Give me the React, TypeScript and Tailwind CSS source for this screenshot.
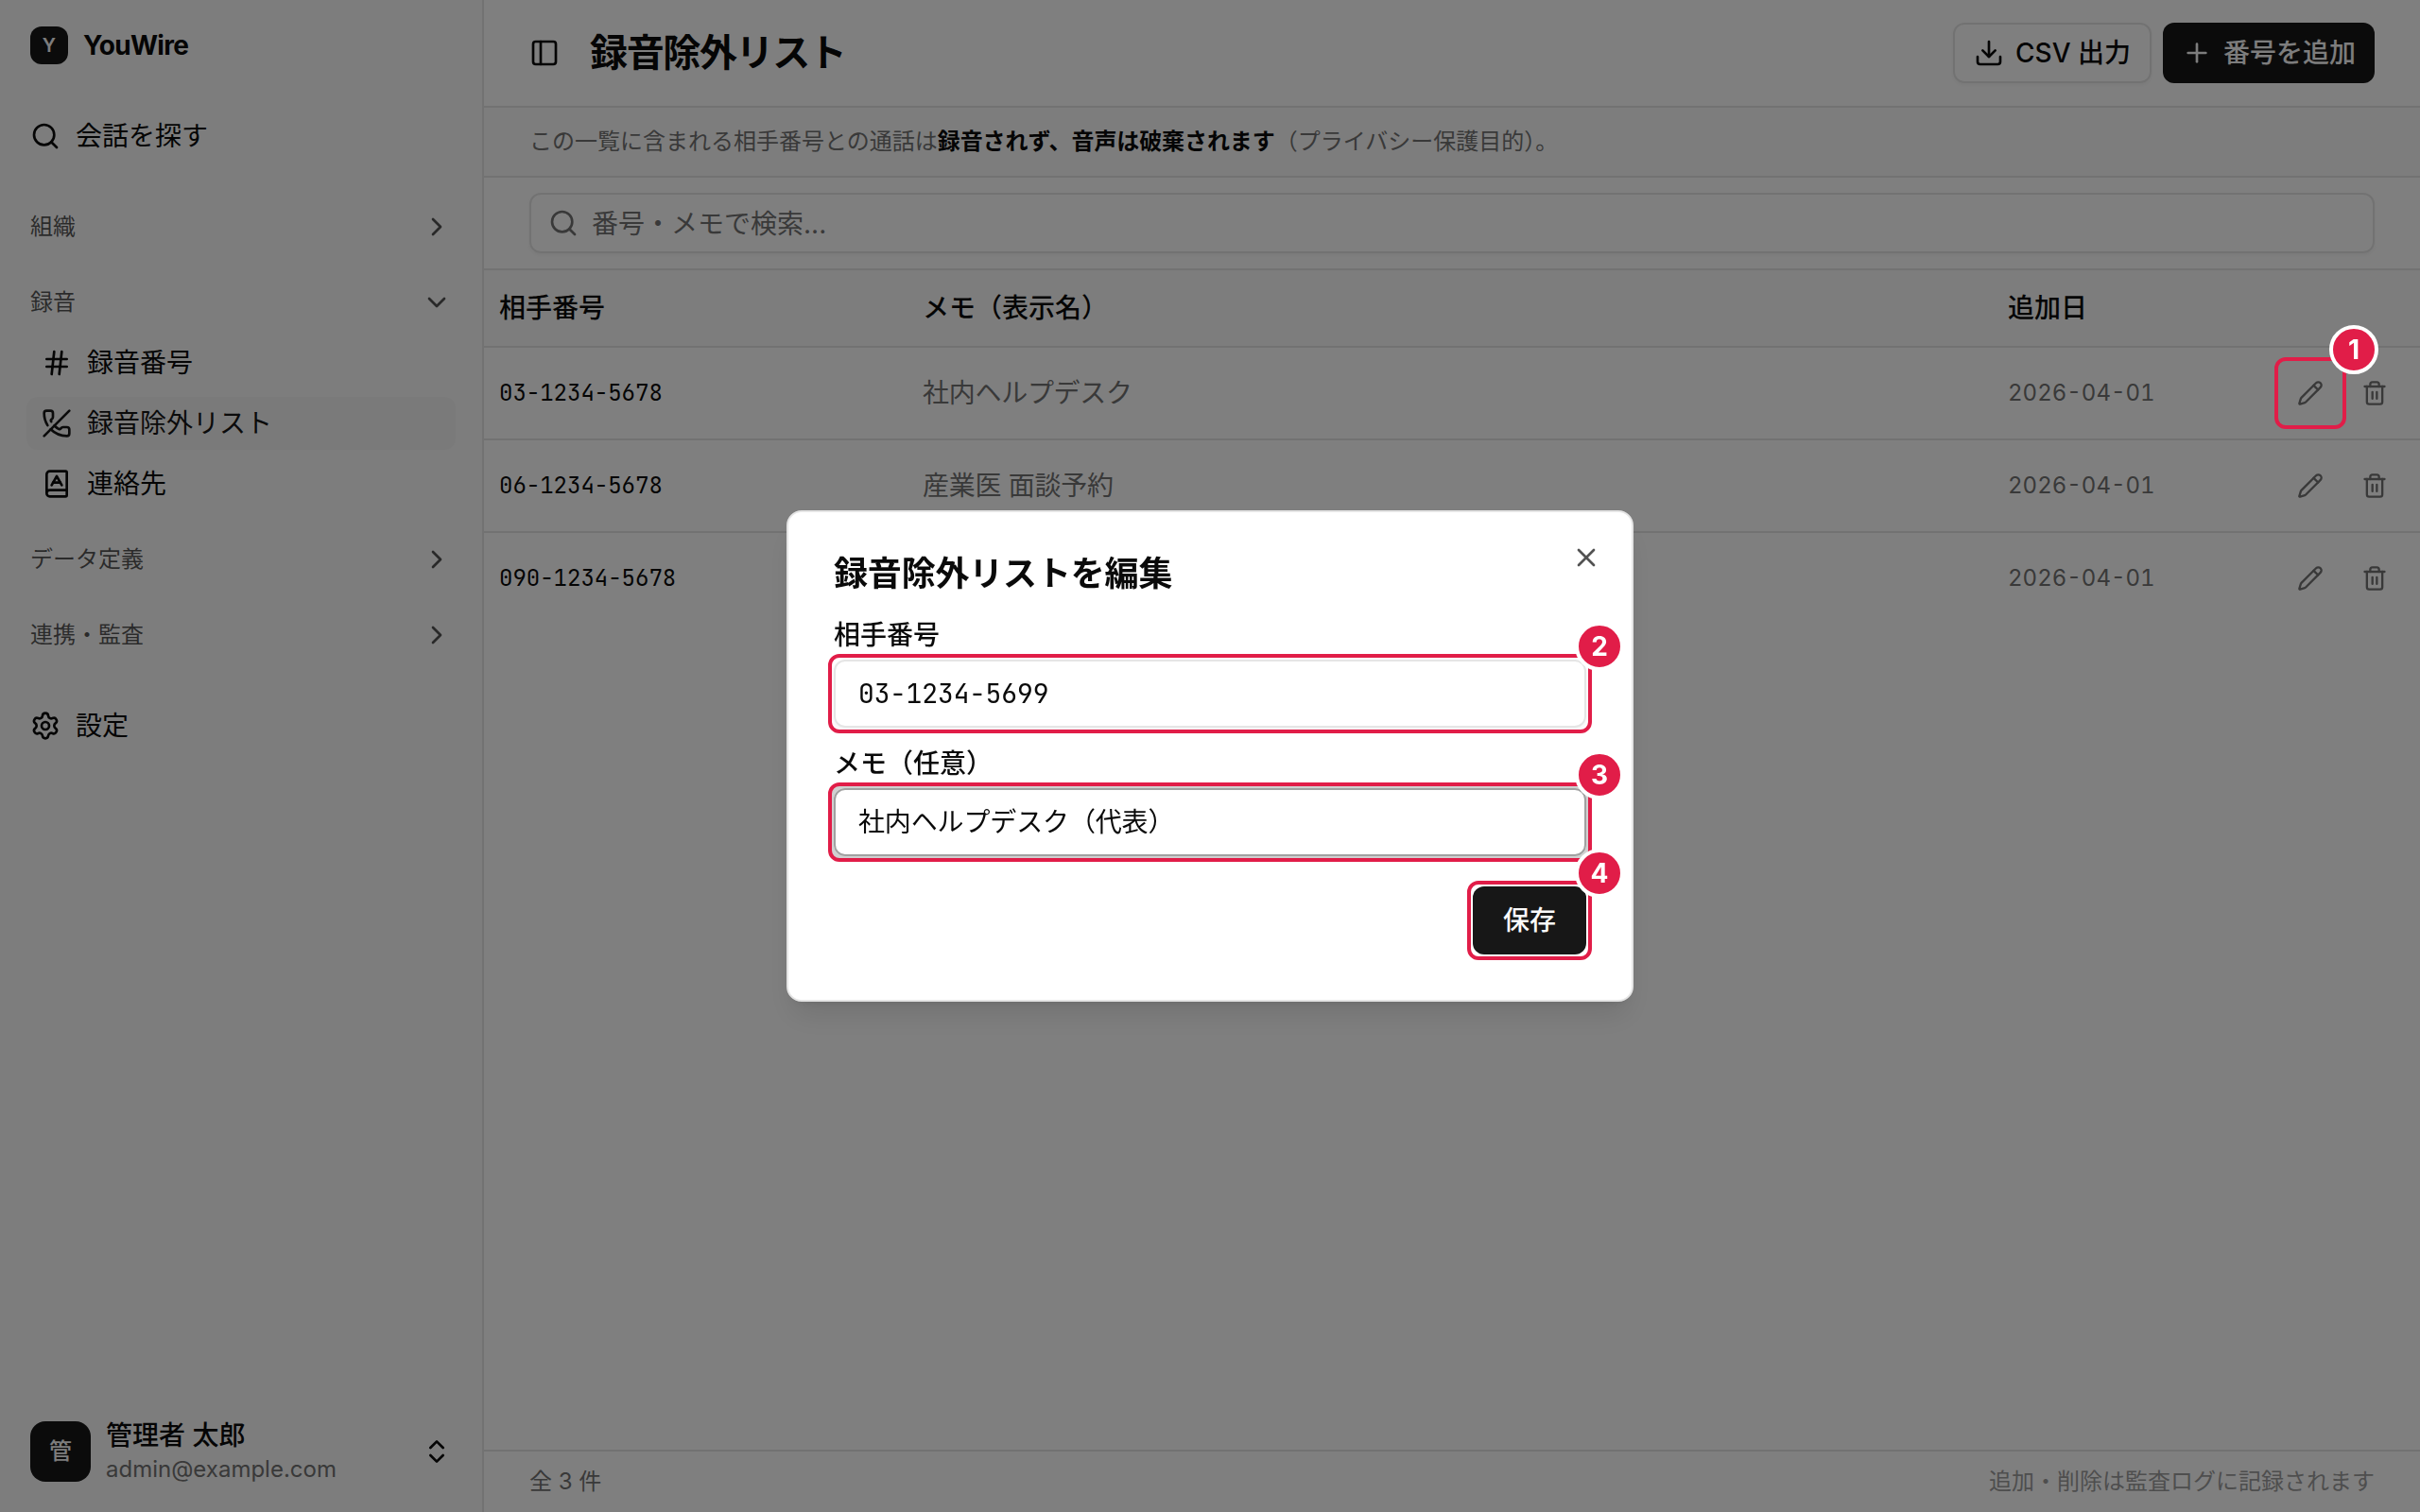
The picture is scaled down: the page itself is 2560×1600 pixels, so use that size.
import type { ReactNode } from 'react';
import {
  BookA,
  ChevronDown,
  ChevronRight,
  ChevronsUpDown,
  Download,
  Hash,
  PanelLeft,
  Pencil,
  PhoneOff,
  Plus,
  Search,
  Settings,
  Trash2,
  X,
} from 'lucide-react';

const ENTRIES = [
  { id: 1, number: '03-1234-5678', memo: '社内ヘルプデスク', addedAt: '2026-04-01' },
  { id: 2, number: '06-1234-5678', memo: '産業医 面談予約', addedAt: '2026-04-01' },
  { id: 3, number: '090-1234-5678', memo: '', addedAt: '2026-04-01' },
];

const RECORDING_ITEMS = [
  { label: '録音番号', icon: Hash, active: false },
  { label: '録音除外リスト', icon: PhoneOff, active: true },
  { label: '連絡先', icon: BookA, active: false },
];

/** 操作手順の番号つき赤枠。親要素（relative）を 6px 外側で囲む。 */
function StepMark({ step }: { step: number }) {
  return (
    <span className="pointer-events-none absolute -inset-1.5 z-50 rounded-xl border-4 border-[#e11d48]">
      <span className="absolute -top-[38px] -right-[38px] flex size-[52px] items-center justify-center rounded-full border-4 border-white bg-[#e11d48] text-[28px] leading-none font-bold text-white">
        {step}
      </span>
    </span>
  );
}

function GroupLabel({ label, open = false }: { label: string; open?: boolean }) {
  const Chevron = open ? ChevronDown : ChevronRight;
  return (
    <button className="flex h-16 w-full items-center justify-between px-4 text-2xl text-[#0a0a0a]/70">
      {label}
      <Chevron size={32} />
    </button>
  );
}

function Sidebar() {
  return (
    <aside className="flex w-[512px] shrink-0 flex-col border-r-2 border-neutral-200 bg-neutral-50 px-4">
      <div className="mt-4 flex h-16 items-center gap-4 px-4">
        <span className="flex size-10 items-center justify-center rounded-xl bg-neutral-900 text-xl font-semibold text-neutral-50">
          Y
        </span>
        <span className="text-[28px] font-bold tracking-tight">YouWire</span>
      </div>

      <nav className="mt-8 flex flex-1 flex-col">
        <a className="flex h-16 items-center gap-4 px-4 text-[28px]">
          <Search size={32} />
          会話を探す
        </a>

        <div className="mt-8 flex flex-col gap-4">
          <GroupLabel label="組織" />
          <div>
            <GroupLabel label="録音" open />
            <ul className="mt-1 mb-1 flex flex-col gap-2 px-3">
              {RECORDING_ITEMS.map(({ label, icon: Icon, active }) => (
                <li
                  key={label}
                  className={`flex h-14 items-center gap-4 rounded-xl px-4 text-[28px] ${
                    active ? 'bg-neutral-100 text-neutral-900' : ''
                  }`}
                >
                  <Icon size={32} />
                  {label}
                </li>
              ))}
            </ul>
          </div>
          <GroupLabel label="データ定義" />
          <GroupLabel label="連携・監査" />
        </div>

        <a className="mt-8 flex h-16 items-center gap-4 px-4 text-[28px]">
          <Settings size={32} />
          設定
        </a>
      </nav>

      <div className="mb-4 flex h-24 items-center gap-4 px-4">
        <span className="flex size-16 items-center justify-center rounded-2xl bg-neutral-900 text-2xl font-medium text-neutral-50">
          管
        </span>
        <div className="flex-1">
          <p className="text-[28px] leading-[35px] font-medium">管理者 太郎</p>
          <p className="pt-0.5 text-2xl leading-8 text-neutral-500">admin@example.com</p>
        </div>
        <ChevronsUpDown size={32} />
      </div>
    </aside>
  );
}

function IconButton({ label, children }: { label: string; children: ReactNode }) {
  return (
    <button
      aria-label={label}
      className="relative flex size-16 items-center justify-center text-neutral-500"
    >
      {children}
    </button>
  );
}

function ExclusionTable() {
  return (
    <div className="flex-1 text-[28px] leading-10">
      <div className="grid h-[82px] grid-cols-[448px_1148px_1fr] items-center border-b-2 border-neutral-200 bg-neutral-50 font-medium">
        <span className="px-4">相手番号</span>
        <span className="px-4">メモ（表示名）</span>
        <span className="px-4">追加日</span>
      </div>
      {ENTRIES.map((e, i) => (
        <div
          key={e.id}
          className="grid h-[98px] grid-cols-[448px_1148px_1fr_auto] items-center border-b-2 border-neutral-200 last:border-transparent"
        >
          <span className="px-4 font-['JetBrains_Mono','Liberation_Mono',monospace] text-2xl">
            {e.number}
          </span>
          <span className="px-4 tracking-[-0.01em] text-neutral-500">{e.memo}</span>
          <span className="px-4 text-2xl text-neutral-500 tabular-nums">{e.addedAt}</span>
          <div className="flex gap-1 px-4">
            <IconButton label="編集">
              <Pencil size={28} />
              {i === 0 && <StepMark step={1} />}
            </IconButton>
            <IconButton label="削除">
              <Trash2 size={28} />
            </IconButton>
          </div>
        </div>
      ))}
    </div>
  );
}

function EditDialog() {
  return (
    <div className="fixed inset-0 z-40 flex items-center justify-center bg-black/50">
      <div
        role="dialog"
        className="relative flex w-[896px] flex-col rounded-2xl border-2 border-neutral-200 bg-white p-12 text-[28px] shadow-[0_20px_30px_-6px_rgb(0_0_0/0.1),0_8px_12px_-8px_rgb(0_0_0/0.1)]"
      >
        <button aria-label="閉じる" className="absolute top-8 right-8 opacity-70">
          <X size={32} />
        </button>
        <h2 className="-mt-px mb-px text-4xl leading-none font-semibold tracking-[-0.005em]">
          録音除外リストを編集
        </h2>

        <label className="mt-8 leading-none font-medium">相手番号</label>
        <div className="relative mt-3 flex h-[72px] items-center rounded-xl border-2 border-neutral-200 px-6 font-['JetBrains_Mono','Liberation_Mono',monospace] shadow-[0_2px_4px_rgb(0_0_0/0.05)]">
          03-1234-5699
        </div>

        <label className="mt-6 leading-none font-medium">メモ（任意）</label>
        <div className="relative mt-3 flex h-[72px] items-center rounded-xl border-2 border-[#a1a1a1] px-6 tracking-[-0.005em] ring-6 ring-[#a1a1a1]/50">
          社内ヘルプデスク（代表）
        </div>

        <button className="relative mt-8 flex h-[72px] w-[120px] items-center justify-center self-end rounded-xl bg-neutral-900 font-medium text-neutral-50">
          保存
        </button>

        {/* 枠は入力欄の内側余白に影響しないよう重ねて描く */}
        <div className="pointer-events-none absolute top-[156px] right-12 left-12 h-[72px]">
          <StepMark step={2} />
        </div>
        <div className="pointer-events-none absolute top-[292px] right-12 left-12 h-[72px]">
          <StepMark step={3} />
        </div>
        <div className="pointer-events-none absolute right-12 bottom-12 h-[72px] w-[120px]">
          <StepMark step={4} />
        </div>
      </div>
    </div>
  );
}

export default function App() {
  return (
    <div
      lang="ja"
      className="flex h-screen overflow-hidden bg-white font-['Inter','Noto_Sans_CJK_JP',sans-serif] text-[#0a0a0a]"
    >
      <Sidebar />
      <main className="flex min-w-0 flex-1 flex-col">
        <header className="flex h-[114px] items-center border-b-2 border-neutral-200 px-12">
          <PanelLeft size={32} />
          <h1 className="ml-8 flex-1 text-[40px] font-semibold tracking-[-0.034em]">
            録音除外リスト
          </h1>
          <div className="flex gap-3 text-[28px] font-medium">
            <button className="flex h-16 items-center gap-3 rounded-xl border-2 border-neutral-200 px-5 shadow-[0_2px_4px_rgb(0_0_0/0.05)]">
              <Download size={32} />
              CSV 出力
            </button>
            <button className="flex h-16 items-center gap-3 rounded-xl bg-neutral-900 px-5 text-neutral-50">
              <Plus size={32} />
              番号を追加
            </button>
          </div>
        </header>

        <p className="flex h-[74px] items-center border-b-2 border-neutral-200 bg-neutral-50 px-12 text-2xl text-neutral-500">
          この一覧に含まれる相手番号との通話は
          <strong className="font-bold tracking-[-0.004em] text-[#0a0a0a]">
            録音されず、音声は破棄されます
          </strong>
          （プライバシー保護目的）。
        </p>

        <div className="border-b-2 border-neutral-200 px-12 py-4">
          <div className="flex h-16 items-center gap-3.5 rounded-xl border-2 border-neutral-200 px-[18px] text-[28px] text-neutral-500 shadow-[0_2px_4px_rgb(0_0_0/0.05)]">
            <Search size={32} />
            <span className="pt-0.5">番号・メモで検索...</span>
          </div>
        </div>

        <ExclusionTable />

        <footer className="flex h-[66px] items-center justify-between border-t-2 border-neutral-200 px-12 text-2xl text-neutral-500">
          <span>全 3 件</span>
          <span className="opacity-70">追加・削除は監査ログに記録されます</span>
        </footer>
      </main>
      <EditDialog />
    </div>
  );
}
